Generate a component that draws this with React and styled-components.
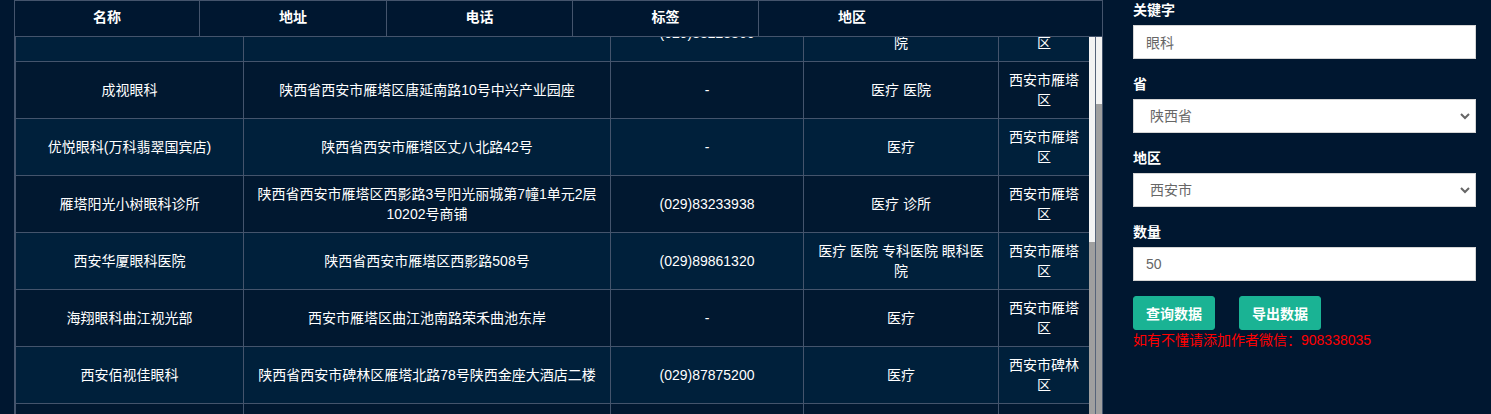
import React from "react";
import styled, { createGlobalStyle } from "styled-components";

const GlobalStyle = createGlobalStyle`
  * { box-sizing: border-box; }
  html, body {
    margin: 0;
    padding: 0;
    height: 100%;
    overflow: hidden;
    background: #001730;
  }
  body {
    font-family: "Liberation Sans", "Noto Sans CJK SC", sans-serif;
    font-size: 14px;
    line-height: 1.42857;
    color: #fff;
  }
`;

const Page = styled.div`
  display: flex;
  height: 414px;
  padding-left: 14px;
`;

const Main = styled.div`
  width: 1089px;
  border-left: 1px solid #44546c;
  border-right: 1px solid #44546c;
  display: flex;
  flex-direction: column;
  overflow: hidden;
`;

const Header = styled.div`
  display: flex;
  height: 37px;
  border-top: 1px solid #44546c;
  border-bottom: 1px solid #44546c;
  background: #001730;
`;

const HeadCell = styled.div`
  width: ${(p) => p.$w}px;
  display: flex;
  align-items: center;
  justify-content: center;
  padding-bottom: 1px;
  font-weight: bold;
  border-right: ${(p) => (p.$last ? "none" : "1px solid #44546c")};
`;

const Body = styled.div`
  flex: 1;
  display: flex;
  overflow: hidden;
`;

const TableClip = styled.div`
  width: 1074px;
  overflow: hidden;
`;

const Table = styled.table`
  width: 1074px;
  margin-top: -33px;
  table-layout: fixed;
  border-collapse: collapse;
`;

const Row = styled.tr`
  background: ${(p) => (p.$light ? "#00203b" : "#011830")};
`;

const Cell = styled.td`
  border: 1px solid #44546c;
  padding: 8px;
  text-align: center;
  vertical-align: middle;
  height: 57px;
  line-height: 20px;
`;

const ScrollRail = styled.div`
  display: flex;
  width: 13px;
`;

const Track = styled.div`
  width: 6px;
  background: #f3f3f3;
  display: flex;
  flex-direction: column;
`;

const Thumb = styled.div`
  margin-top: ${(p) => p.$top}px;
  flex: 1;
  background: #9f9f9f;
`;

const RailGap = styled.div`
  width: 1px;
  background: #56647a;
`;

const Sidebar = styled.div`
  width: 388px;
  padding: 0 15px 0 30px;
`;

const Group = styled.div`
  margin-bottom: 15px;
`;

const Label = styled.label`
  display: block;
  font-weight: bold;
  line-height: 20px;
  margin-bottom: 5px;
`;

const Input = styled.input`
  display: block;
  width: 100%;
  height: 34px;
  padding: 6px 12px;
  border: 1px solid #d5d5d5;
  border-radius: 0;
  background: #fff;
  color: #666;
  font-family: inherit;
  font-size: 14px;
  outline: none;
`;

const SelectBox = styled.div`
  position: relative;
`;

const Select = styled.select`
  display: block;
  width: 100%;
  height: 34px;
  padding: 6px 12px 6px 16px;
  border: 1px solid #d5d5d5;
  border-radius: 0;
  background: #fff;
  color: #666;
  font-family: inherit;
  font-size: 14px;
  appearance: none;
  outline: none;
`;

const Caret = styled.svg`
  position: absolute;
  right: 6px;
  top: 14px;
  pointer-events: none;
`;

const Actions = styled.div`
  display: flex;
  gap: 24px;
`;

const Button = styled.button`
  height: 34px;
  padding: 6px 12px;
  background: #1ab394;
  border: 1px solid #1ab394;
  border-radius: 3px;
  color: #fff;
  font-family: inherit;
  font-size: 14px;
  font-weight: bold;
`;

const Notice = styled.div`
  color: #ff0000;
  line-height: 20px;
`;

const heads = [
  ["名称", 185],
  ["地址", 187],
  ["电话", 186],
  ["标签", 186],
  ["地区", 186],
];

const rows = [
  ["", "", "(029)88228866", "医疗 医院 专科医院 眼科医院", "西安市雁塔区"],
  ["成视眼科", "陕西省西安市雁塔区唐延南路10号中兴产业园座", "-", "医疗 医院", "西安市雁塔区"],
  ["优悦眼科(万科翡翠国宾店)", "陕西省西安市雁塔区丈八北路42号", "-", "医疗", "西安市雁塔区"],
  ["雁塔阳光小树眼科诊所", "陕西省西安市雁塔区西影路3号阳光丽城第7幢1单元2层10202号商铺", "(029)83233938", "医疗 诊所", "西安市雁塔区"],
  ["西安华厦眼科医院", "陕西省西安市雁塔区西影路508号", "(029)89861320", "医疗 医院 专科医院 眼科医院", "西安市雁塔区"],
  ["海翔眼科曲江视光部", "西安市雁塔区曲江池南路荣禾曲池东岸", "-", "医疗", "西安市雁塔区"],
  ["西安佰视佳眼科", "陕西省西安市碑林区雁塔北路78号陕西金座大酒店二楼", "(029)87875200", "医疗", "西安市碑林区"],
  ["西安普瑞眼科医院", "陕西省西安市雁塔区长安南路", "-", "医疗 医院", "西安市雁塔区"],
];

const colWidths = [228, 367, 193, 195, 91];

const ChevronIcon = () => (
  <Caret width="10" height="7" viewBox="0 0 10 7">
    <polyline points="1,1 5,5 9,1" fill="none" stroke="#666" strokeWidth="2" />
  </Caret>
);

export default function App() {
  return (
    <>
      <GlobalStyle />
      <Page>
        <Main>
          <Header>
            {heads.map(([t, w], i) => (
              <HeadCell key={t} $w={w} $last={i === heads.length - 1}>
                {t}
              </HeadCell>
            ))}
          </Header>
          <Body>
            <TableClip>
              <Table>
                <colgroup>
                  {colWidths.map((w, i) => (
                    <col key={i} style={{ width: w }} />
                  ))}
                </colgroup>
                <tbody>
                  {rows.map((r, i) => (
                    <Row key={i} $light={i % 2 === 0}>
                      {r.map((c, j) => (
                        <Cell key={j}>{c}</Cell>
                      ))}
                    </Row>
                  ))}
                </tbody>
              </Table>
            </TableClip>
            <ScrollRail>
              <Track>
                <Thumb $top={205} />
              </Track>
              <RailGap />
              <Track>
                <Thumb $top={67} />
              </Track>
            </ScrollRail>
          </Body>
        </Main>
        <Sidebar>
          <Group>
            <Label>关键字</Label>
            <Input defaultValue="眼科" />
          </Group>
          <Group>
            <Label>省</Label>
            <SelectBox>
              <Select defaultValue="陕西省">
                <option>陕西省</option>
              </Select>
              <ChevronIcon />
            </SelectBox>
          </Group>
          <Group>
            <Label>地区</Label>
            <SelectBox>
              <Select defaultValue="西安市">
                <option>西安市</option>
              </Select>
              <ChevronIcon />
            </SelectBox>
          </Group>
          <Group>
            <Label>数量</Label>
            <Input defaultValue="50" />
          </Group>
          <Actions>
            <Button>查询数据</Button>
            <Button>导出数据</Button>
          </Actions>
          <Notice>如有不懂请添加作者微信：908338035</Notice>
        </Sidebar>
      </Page>
    </>
  );
}
